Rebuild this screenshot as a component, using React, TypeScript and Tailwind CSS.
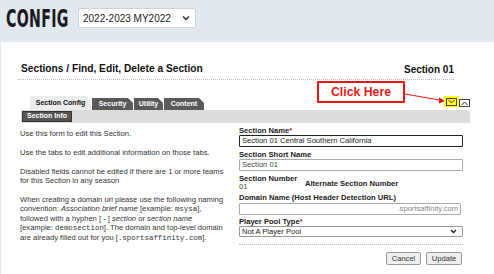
import React from "react";

const tabClip = "[clip-path:polygon(0_0,calc(100%-5px)_0,100%_5px,100%_100%,0_100%)]";
const mono = "font-['Liberation_Mono',monospace] text-[7.4px]";

export default function App() {
  return (
    <div className="w-[494px] h-[274px] bg-[#e2e8f0] overflow-hidden relative font-['Liberation_Sans',Arial,sans-serif] text-[#222]">
      {/* Top bar */}
      <div className="h-[42px] flex items-center pl-[6px] gap-[12px]">
        <span className="inline-block w-[60px] overflow-visible whitespace-nowrap">
          <span className="inline-block origin-left scale-x-[0.63] text-[25px] font-bold leading-none tracking-[0.5px] text-[#1a1a1a] font-['DejaVu_Sans_Condensed','DejaVu_Sans',sans-serif] mt-[-2px]">
            CONFIG
          </span>
        </span>
        <div className="w-[118px] h-[20px] mt-[-6px] bg-white border border-[#d0d4da] rounded-[2px] flex items-center justify-between pl-[4px] pr-[5px]">
          <span className="text-[10px] text-[#222]">2022-2023 MY2022</span>
          <svg width="8" height="6" viewBox="0 0 8 6">
            <path d="M1 1.5 L4 4.5 L7 1.5" stroke="#333" strokeWidth="1.5" fill="none" />
          </svg>
        </div>
      </div>

      {/* White panel */}
      <div className="ml-px h-[232px] bg-white relative">
        {/* Header */}
        <div className="pl-[20px] pr-[40px] pt-[21px]">
          <div className="flex justify-between items-center h-[12px]">
            <span className="text-[10.2px] font-bold text-[#111]">Sections / Find, Edit, Delete a Section</span>
            <span className="text-[10px] font-bold text-[#111]">Section 01</span>
          </div>
          <div className="mt-[4px] ml-[-3px] border-t border-dotted border-[#b8b8d0]" />
        </div>

        {/* Tabs */}
        <div className="mt-[16px] ml-[29px] flex items-end h-[14px]">
          <div className={`h-[14px] w-[61px] bg-[#ececec] flex items-center justify-center text-[7px] font-bold text-[#111] ${tabClip}`}>
            Section Config
          </div>
          <div className={`ml-px h-[12px] w-[41px] bg-[#5a5a5a] flex items-center justify-center text-[7px] font-bold text-white ${tabClip}`}>
            Security
          </div>
          <div className={`ml-px h-[12px] w-[29px] bg-[#5a5a5a] flex items-center justify-center text-[7px] font-bold text-white ${tabClip}`}>
            Utility
          </div>
          <div className={`ml-px h-[12px] w-[40px] bg-[#5a5a5a] flex items-center justify-center text-[7px] font-bold text-white ${tabClip}`}>
            Content
          </div>
        </div>
        <div className="ml-[20px] w-[449px] h-[13px] bg-[#dcdcdc] rounded-tr-[4px] flex items-center pl-[1px]">
          <div className="h-[11px] w-[50px] bg-[#555] border border-[#333] flex items-center justify-center text-[7px] font-bold text-white">
            Section Info
          </div>
        </div>

        {/* Body */}
        <div className="flex pl-[19px] pt-[3px]">
          <div className="w-[212px] text-[7.6px] leading-[9px] text-[#333] flex flex-col gap-[10px] pt-[3px]">
            <p>Use this form to edit this Section.</p>
            <p>Use the tabs to edit additional information on those tabs.</p>
            <p>Disabled fields cannot be edited if there are 1 or more teams for this Section in any season</p>
            <p className="whitespace-nowrap">
              When creating a domain url please use the following naming
              <br />
              convention: <i>Association brief name</i> [example: <span className={mono}>msysa</span>],
              <br />
              followed with a hyphen [ - ] <i>section</i> or <i>section name</i>
              <br />
              [example: <span className={mono}>demosection</span>]. The domain and top-level domain
              <br />
              are already filled out for you [<span className={mono}>.sportsaffinity.com</span>].
            </p>
          </div>
          <div className="ml-[7px] w-[224px] flex flex-col text-[7.6px]">
            <div className="font-bold leading-[9px] text-[#222]">
              Section Name<span className="text-[#d00]">*</span>
            </div>
            <div className="h-[12px] border border-[#222] rounded-[1px] flex items-center pl-[2px] text-[#222]">
              Section 01 Central Southern California
            </div>
            <div className="font-bold leading-[9px] text-[#222] mt-[3px]">Section Short Name</div>
            <div className="h-[12px] border border-[#aaa] rounded-[1px] flex items-center pl-[2px] text-[#444]">
              Section 01
            </div>
            <div className="flex mt-[3px]">
              <div className="w-[66px] shrink-0">
                <div className="font-bold leading-[9px] text-[#222] whitespace-nowrap">Section Number</div>
                <div className="leading-[8px] text-[#444]">01</div>
              </div>
              <div className="font-bold leading-[9px] text-[#222] mt-[5px] whitespace-nowrap">Alternate Section Number</div>
            </div>
            <div className="font-bold leading-[9px] text-[#222] mt-[2px]">Domain Name (Host Header Detection URL)</div>
            <div className="h-[12px] w-[222px] border border-[#aaa] rounded-[1px] flex items-center justify-end pr-[2px] text-[#888] mt-[1px]">
              .sportsaffinity.com
            </div>
            <div className="font-bold leading-[9px] text-[#222] mt-[2px]">
              Player Pool Type<span className="text-[#d00]">*</span>
            </div>
            <div className="h-[11px] border border-[#999] rounded-[1px] flex items-center justify-between pl-[2px] pr-[5px] text-[#222]">
              <span>Not A Player Pool</span>
              <svg width="7" height="5" viewBox="0 0 7 5">
                <path d="M1 1 L3.5 3.5 L6 1" stroke="#222" strokeWidth="1.4" fill="none" />
              </svg>
            </div>
            <div className="mt-[7px] border-t border-dotted border-[#b8b8d0]" />
            <div className="flex justify-end gap-[5px] mt-[7px] pr-px">
              <div className="h-[13px] w-[35px] bg-[#efefef] border border-[#999] rounded-[2px] flex items-center justify-center text-[#333]">
                Cancel
              </div>
              <div className="h-[13px] w-[36px] bg-[#efefef] border border-[#999] rounded-[2px] flex items-center justify-center text-[#333]">
                Update
              </div>
            </div>
          </div>
        </div>
      </div>

      {/* Overlays: Click Here callout */}
      <div className="absolute left-[317px] top-[81px] w-[88px] h-[22px] border-2 border-[#e81818] bg-white flex items-center justify-center">
        <span className="text-[12.3px] font-bold text-[#e81818] leading-none">Click Here</span>
      </div>
      <svg className="absolute left-[404px] top-[91px]" width="44" height="14" viewBox="0 0 44 14">
        <line x1="1" y1="3" x2="38" y2="9.5" stroke="#e81818" strokeWidth="1.2" />
        <path d="M41 10 L35 6.5 L35 12.5 Z" fill="#e81818" />
      </svg>
      <div className="absolute left-[444px] top-[96px] w-[15px] h-[11px] bg-[#ffff1a] flex items-center justify-center">
        <div className="w-[11px] h-[8px] border border-[#444] flex items-center justify-center">
          <svg width="7" height="5" viewBox="0 0 7 5">
            <path d="M0.5 1 L3.5 4 L6.5 1" stroke="#222" strokeWidth="1" fill="none" />
          </svg>
        </div>
      </div>
      <div className="absolute left-[459px] top-[99px] w-[11px] h-[8px] border border-[#444] bg-white flex items-center justify-center">
        <svg width="7" height="5" viewBox="0 0 7 5">
          <path d="M0.5 4 L3.5 1 L6.5 4" stroke="#222" strokeWidth="1" fill="none" />
        </svg>
      </div>
    </div>
  );
}
